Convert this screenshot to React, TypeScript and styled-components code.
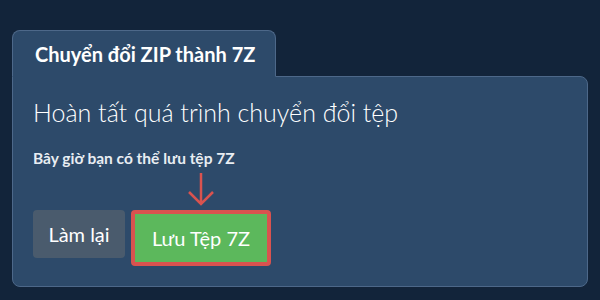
import React from 'react';
import styled, { createGlobalStyle } from 'styled-components';

const GlobalStyle = createGlobalStyle`
  html, body {
    margin:0;
    padding:0;
    background:#12243a;
    font-family:Lato, "Liberation Sans", sans-serif;
  }
`;

const Page = styled.div`
  width:600px;
  height:300px;
  padding:30px 12px 0;
  box-sizing:border-box;
`;

const Tab = styled.div`
  display:inline-block;
  position:relative;
  z-index:1;
  margin-bottom:-1px;
  padding:13px 0 12px 22px;
  width:264px;
  box-sizing:border-box;
  background:#2d4a6a;
  border:1px solid #4d6889;
  border-bottom:1px solid #2d4a6a;
  border-radius:8px 8px 0 0;
  color:#fff;
  font-size:20px;
  font-weight:700;
  line-height:20px;
  white-space:nowrap;
`;

const Panel = styled.section`
  background:#2d4a6a;
  border:1px solid #4d6889;
  border-radius:0 8px 8px 8px;
  height:211px;
  box-sizing:border-box;
  padding:20px 20px 0;
  color:#fff;
`;

const Heading = styled.h2`
  margin:0;
  font-size:25px;
  font-weight:300;
  line-height:30px;
`;

const Note = styled.p`
  margin:22px 0 0;
  font-size:15.5px;
  font-weight:700;
  line-height:18px;
  color:#e8edf2;
`;

const Actions = styled.div`
  display:flex;
  align-items:flex-start;
  gap:6px;
  margin-top:43px;
`;

const Button = styled.button<{ $primary?: boolean }>`
  font-family:inherit;
  font-size:20px;
  color:#fff;
  border:none;
  border-radius:${p => (p.$primary ? '0' : '4px')};
  height:48px;
  width:${p => (p.$primary ? '132px' : '92px')};
  padding:0;
  background:${p => (p.$primary ? '#5cb85c' : '#4a5b6d')};
`;

const Highlight = styled.div`
  border:4px solid #d9534f;
  border-radius:4px;
  display:flex;
  position:relative;
`;

const Arrow = styled.svg`
  position:absolute;
  left:50%;
  top:-42px;
  margin-left:-14px;
`;

export default function App() {
  return (
    <Page>
      <GlobalStyle />
      <Tab>Chuyển đổi ZIP thành 7Z</Tab>
      <Panel>
        <Heading>Hoàn tất quá trình chuyển đổi tệp</Heading>
        <Note>Bây giờ bạn có thể lưu tệp 7Z</Note>
        <Actions>
          <Button>Làm lại</Button>
          <Highlight>
            <Arrow width="28" height="34" viewBox="0 0 28 34">
              <path d="M14 1 V32 M2 20 L14 32 L26 20" stroke="#d9534f" strokeWidth="2.5" fill="none" />
            </Arrow>
            <Button $primary>Lưu Tệp 7Z</Button>
          </Highlight>
        </Actions>
      </Panel>
    </Page>
  );
}
